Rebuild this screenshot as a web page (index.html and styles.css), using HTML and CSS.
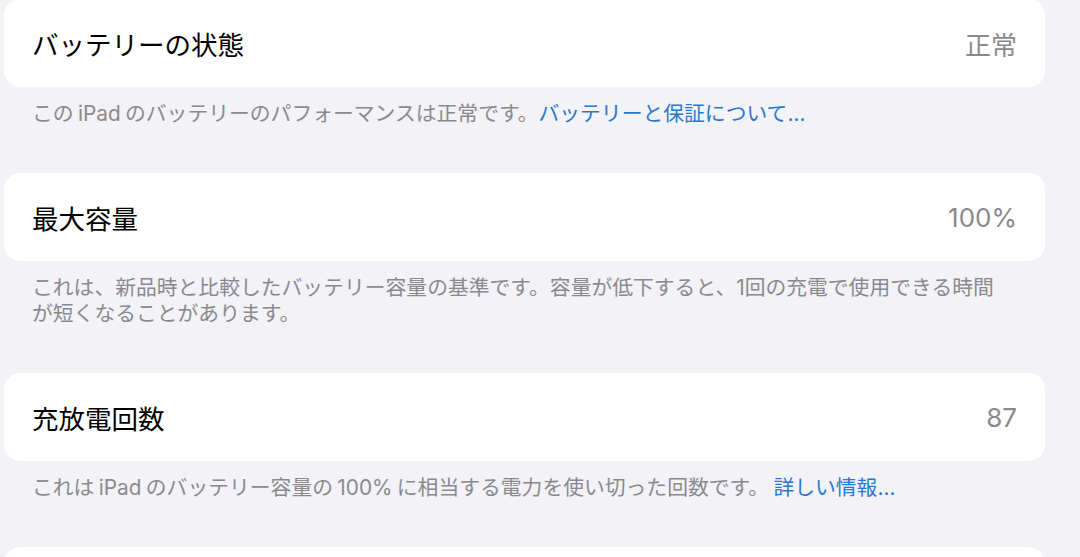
FILE: index.html
```html
<!DOCTYPE html>
<html lang="ja">
<head>
<meta charset="utf-8">
<title>バッテリーの状態</title>
<link rel="stylesheet" href="styles.css">
</head>
<body>
<main class="list">
  <section class="group first">
    <div class="card">
      <span class="label">バッテリーの状態</span>
      <span class="value">正常</span>
    </div>
    <p class="footer">この iPad のバッテリーのパフォーマンスは正常です。<a class="link" href="#">バッテリーと保証について...</a></p>
  </section>
  <section class="group">
    <div class="card">
      <span class="label">最大容量</span>
      <span class="value">100%</span>
    </div>
    <p class="footer">これは、新品時と比較したバッテリー容量の基準です。容量が低下すると、1回の充電で使用できる時間が短くなることがあります。</p>
  </section>
  <section class="group">
    <div class="card">
      <span class="label">充放電回数</span>
      <span class="value">87</span>
    </div>
    <p class="footer">これは iPad のバッテリー容量の 100% に相当する電力を使い切った回数です。 <a class="link" href="#">詳しい情報...</a></p>
  </section>
  <section class="group">
    <div class="card"></div>
  </section>
</main>
</body>
</html>
```

FILE: styles.css
```css
html, body {
  margin: 0;
  padding: 0;
  background: #f2f2f7;
  overflow: hidden;
}

body {
  font-family: Inter, "Noto Sans CJK JP", sans-serif;
  color: #000;
  height: 557px;
}

.list {
  display: flex;
  flex-direction: column;
  width: 1041px;
  padding-left: 4px;
  margin-top: -1px;
}

.group {
  display: flex;
  flex-direction: column;
}

.card {
  height: 88px;
  background: #ffffff;
  border-radius: 16px;
  display: flex;
  align-items: center;
  justify-content: space-between;
  padding: 0 28px;
  box-sizing: border-box;
}

.label {
  font-size: 26.5px;
  font-weight: 400;
  color: #000;
}

.value {
  font-size: 26px;
  color: #8a8a8e;
  font-weight: 400;
}

.footer {
  margin: 0;
  padding: 14px 38px 46px 28px;
  font-size: 20.8px;
  line-height: 26px;
  word-spacing: -1.5px;
  color: #8a8a8e;
}

.link {
  color: #2a78cc;
  text-decoration: none;
}
```
